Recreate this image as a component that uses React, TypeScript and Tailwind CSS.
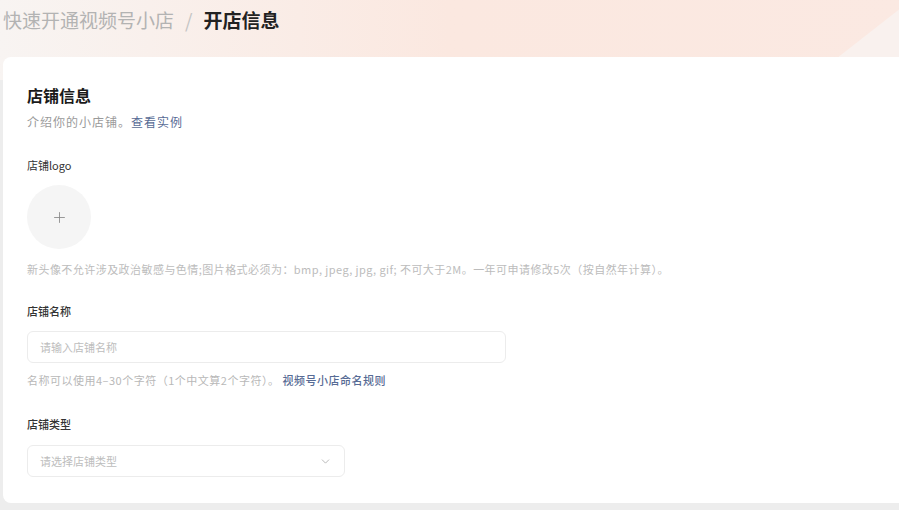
import { ChevronDown, Plus } from "lucide-react";

const font = { fontFamily: '"Noto Sans CJK SC", "Noto Sans", sans-serif' };

const App = () => {
  return (
    <div className="w-[899px] h-[510px] overflow-hidden bg-[#ededed] flex flex-col" style={font}>
      <div className="relative h-[80px] shrink-0 bg-gradient-to-r from-[#f8f4f2] via-[#fbe8e0] to-[#fbe9e2]">
        <div className="absolute right-0 top-0 h-[80px] w-[90px] bg-[#f9f1ee] [clip-path:polygon(100%_12%,100%_100%,0_100%)]" />
        <div className="relative pl-[3px] pt-[6px] text-[19px] leading-[28px] flex items-center gap-[11px]">
          <span className="text-[#b3b3b3]">快速开通视频号小店</span>
          <span className="text-[#c4c4c4]">/</span>
          <span className="font-bold text-[#222]">开店信息</span>
        </div>
      </div>
      <div className="-mt-[23px] ml-[3px] mr-[-10px] h-[446px] bg-white rounded-[8px] relative px-[24px] pt-[27px]">
        <div className="text-[16px] font-bold text-[#1a1a1a] leading-[22px]">店铺信息</div>
        <div className="text-[12px] tracking-[1px] leading-[16px] mt-[8px] text-[#9a9a9a]">
          介绍你的小店铺。<span className="text-[#576b95]">查看实例</span>
        </div>
        <div className="text-[11px] leading-[14px] mt-[28px] text-[#333]">店铺logo</div>
        <div className="mt-[13px] w-[64px] h-[64px] rounded-full bg-[#f5f5f5] flex items-center justify-center">
          <Plus className="w-[17px] h-[17px] text-[#888]" strokeWidth={1.2} />
        </div>
        <div className="mt-[13px] text-[11px] tracking-[0.45px] leading-[14px] text-[#bcbcbc] whitespace-nowrap">
          新头像不允许涉及政治敏感与色情;图片格式必须为：bmp, jpeg, jpg, gif; 不可大于2M。一年可申请修改5次（按自然年计算）。
        </div>
        <div className="text-[11px] leading-[14px] mt-[28px] text-[#333] font-medium">店铺名称</div>
        <div className="mt-[13px] w-[479px] h-[32px] border border-[#ececec] rounded-[6px] flex items-center px-[12px] text-[11px] text-[#bdbdbd]">
          请输入店铺名称
        </div>
        <div className="mt-[10px] text-[11px] tracking-[0.5px] leading-[14px] text-[#b8b8b8]">
          名称可以使用4–30个字符（1个中文算2个字符）。 <span className="text-[#576b95] font-medium">视频号小店命名规则</span>
        </div>
        <div className="text-[11px] leading-[14px] mt-[30px] text-[#333] font-medium">店铺类型</div>
        <div className="mt-[14px] w-[318px] h-[32px] border border-[#ececec] rounded-[6px] flex items-center justify-between pl-[12px] pr-[12px] text-[11px] text-[#bdbdbd]">
          <span>请选择店铺类型</span>
          <ChevronDown className="w-[13px] h-[13px] text-[#aaa]" strokeWidth={1.5} />
        </div>
      </div>
    </div>
  );
};

export default App;
